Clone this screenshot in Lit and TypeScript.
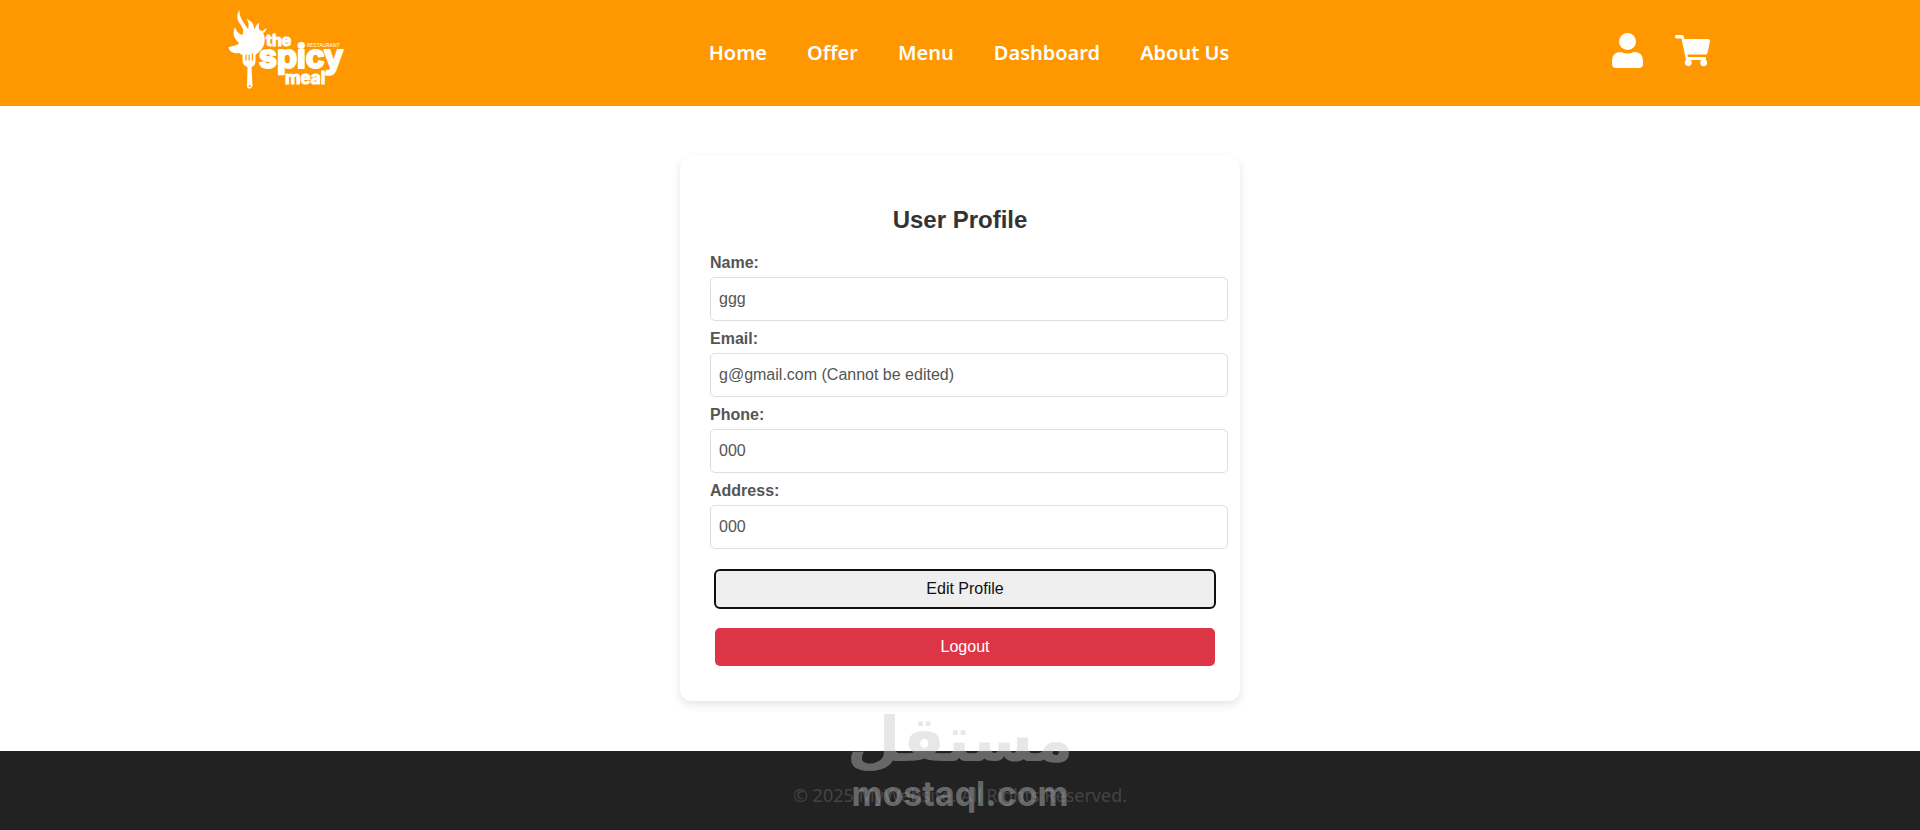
import { LitElement, html, css, svg } from "lit";
import { customElement } from "lit/decorators.js";

const NAV = ["Home", "Offer", "Menu", "Dashboard", "About Us"];

const FIELDS = [
  { id: "name", label: "Name:", value: "ggg" },
  { id: "email", label: "Email:", value: "g@gmail.com (Cannot be edited)" },
  { id: "phone", label: "Phone:", value: "000" },
  { id: "address", label: "Address:", value: "000" },
];

@customElement("spicy-logo")
export class SpicyLogo extends LitElement {
  static styles = css`
    :host { display: block; }
    .mark { display: block; width: 122px; height: 90px; fill: #fff; }
    .word { font-family: Inter, sans-serif; font-weight: 700; stroke: #fff; stroke-linejoin: round; }
    .the { font-size: 16px; stroke-width: 1; }
    .spicy { font-size: 32px; stroke-width: 2; }
    .meal { font-size: 17px; stroke-width: 1; }
    .tiny { font-family: Inter, sans-serif; font-size: 5px; }
  `;
  render() {
    return html`<svg class="mark" viewBox="228 5 122 90" role="img" aria-label="The Spicy Meal Restaurant">
      ${svg`
      <path d="M239.500 10 C236 15 237 20 240 24 C243 28 244 30 242.500 35 C239 34 236 31 235 27 C232 33 234 39 239 43 C237 46 232 46 228.500 47 C229 52 234 54 239 53 C243 56 252 58 258 53 C264 48 266 42 264 35 L263 33 C265 32 266 31 266.500 28 L262.500 31 C261 31 260 30 259 29 C258.500 27 259.500 25 259 23 C256 24 256 28 254 29 C254 24 252 21 246.500 19 C249 22 249 26 248 29 C245 24 239 18 239.500 10Z"/>
      <path d="M242.500 52 H255.500 V61 Q255.500 66 251.500 67 L252.500 86 Q250 91 247 87 L247.500 67 Q242.500 65 242.500 61Z"/>
      <path d="M246 55 V60 M249.200 55 V60 M252.400 54 V60" stroke="#ff9800" stroke-width="1.200" stroke-linecap="round"/>
      <circle cx="249.800" cy="86" r="1" fill="#ff9800"/>
      <text class="word the" x="266" y="46">the</text>
      <text class="word spicy" x="259" y="68">spicy</text>
      <text class="word meal" x="285" y="84">meal</text>
      <text class="tiny" x="307" y="47">RESTAURANT</text>`}
    </svg>`;
  }
}

@customElement("app-root")
export class AppRoot extends LitElement {
  static styles = css`
    :host {
      display: flex;
      flex-direction: column;
      min-height: 100vh;
      background: #fff;
      font-family: "Liberation Sans", Arial, sans-serif;
      font-size: 16px;
    }
    .header {
      display: grid;
      grid-template-columns: 1fr auto 1fr;
      align-items: center;
      height: 106px;
      padding: 0 210px 0 228px;
      background: #ff9800;
    }
    .logo { justify-self: start; padding-bottom: 6px; }
    .nav { display: flex; gap: 40px; }
    .nav a {
      color: #fff;
      font: 600 20px/24px "Noto Sans", sans-serif;
      text-decoration: none;
    }
    .actions { display: flex; gap: 30px; justify-self: end; padding-bottom: 6px; }
    .action { display: block; padding: 0; border: 0; background: none; cursor: pointer; }
    .icon { display: block; width: 35px; height: 35px; fill: #fff; }
    .main { flex: 1; padding: 50px 16px; }
    .card {
      width: 100%;
      max-width: 560px;
      margin: 0 auto;
      padding: 50px 30px 35px;
      box-sizing: border-box;
      border-radius: 12px;
      box-shadow: 0 4px 10px rgba(0, 0, 0, 0.1);
    }
    .title {
      margin: 0 0 20px;
      color: #333;
      font-size: 24px;
      line-height: 28px;
      text-align: center;
    }
    .field { display: grid; width: calc(100% + 18px); }
    .label {
      padding: 0 0 5px;
      color: #555;
      font-weight: 700;
      line-height: 18px;
    }
    .field + .field { margin-top: 9px; }
    .input {
      width: 100%;
      height: 44px;
      box-sizing: border-box;
      padding: 8px;
      border: 1px solid #ddd;
      border-radius: 5px;
      background: #fff;
      color: #555;
      font: inherit;
    }
    .buttons { display: grid; gap: 20px; width: 100%; margin: 21px 5px 0; }
    .button {
      height: 38px;
      border: 0;
      border-radius: 5px;
      font: inherit;
      cursor: pointer;
    }
    .edit { background: #efefef; color: #101010; outline: 2px solid #101010; outline-offset: -1px; }
    .logout { background: #dc3545; color: #fff; }
    .footer {
      position: relative;
      padding: 32px 16px 23px;
      background: #222;
      color: #444;
      text-align: center;
    }
    .copy { margin: 0; font: 18px/24px "Noto Sans", sans-serif; }
    .watermark {
      position: absolute;
      left: 50%;
      bottom: 16px;
      display: grid;
      justify-items: center;
      transform: translateX(-50%);
      color: #c5c7c7;
      opacity: 0.42;
      pointer-events: none;
    }
    .arabic { font: 700 62px/68px "DejaVu Sans", sans-serif; }
    .latin { font: 700 34px/40px Inter, sans-serif; }
  `;

  render() {
    return html`
      <header class="header">
        <spicy-logo class="logo"></spicy-logo>
        <nav class="nav">${NAV.map((n) => html`<a href="#">${n}</a>`)}</nav>
        <div class="actions">
          <button class="action" aria-label="Profile">
            <svg class="icon" viewBox="0 0 35 35"><circle cx="17.500" cy="8.500" r="8.500"/><path d="M2 31V28Q2 19 11 19Q17.500 22 24 19Q33 19 33 28V31Q33 35 29 35H6Q2 35 2 31Z"/></svg>
          </button>
          <button class="action" aria-label="Cart">
            <svg class="icon" viewBox="0 0 35 35"><path d="M1.500 2H7Q8.500 2 9 4L9.400 6H33.500Q35 6 35 8L32.500 20Q32 21.500 30.500 21.500H12.500L13 24H30Q31.500 24 31 26L30.800 27A3.500 3.500 0 1 1 26.500 27H15.500A3.500 3.500 0 1 1 11 27L6.500 5.500H2Q0 5.500 0 4Q0 2 1.500 2Z"/></svg>
          </button>
        </div>
      </header>
      <main class="main">
        <form class="card" @submit=${(e: Event) => e.preventDefault()}>
          <h2 class="title">User Profile</h2>
          ${FIELDS.map((f) => html`<div class="field">
            <label class="label" for=${f.id}>${f.label}</label>
            <input class="input" id=${f.id} type="text" readonly .value=${f.value} />
          </div>`)}
          <div class="buttons">
            <button class="button edit" type="button">Edit Profile</button>
            <button class="button logout" type="button">Logout</button>
          </div>
        </form>
      </main>
      <footer class="footer">
        <p class="copy">© 2025 MyWebsite. All Rights Reserved.</p>
        <div class="watermark">
          <span class="arabic" lang="ar" dir="rtl">مستقل</span>
          <span class="latin">mostaql.com</span>
        </div>
      </footer>
    `;
  }
}
